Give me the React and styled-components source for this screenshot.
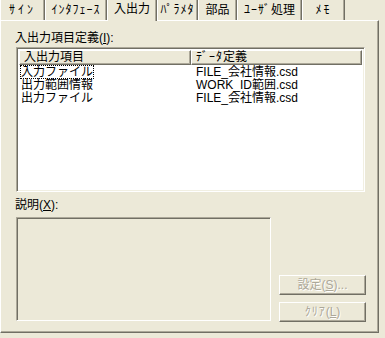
import React from "react";
import styled, { createGlobalStyle } from "styled-components";

const FONT = `"Liberation Sans", "Noto Sans CJK JP", sans-serif`;

const Global = createGlobalStyle`
  html, body { margin: 0; padding: 0; background: #ECE9D8; }
  body { font-family: ${FONT}; font-size: 12px; color: #000; }
  * { box-sizing: border-box; }
`;

const Page = styled.div`
  width: 385px;
  height: 338px;
  background: #ECE9D8;
  overflow: hidden;
`;

const Dialog = styled.div`
  width: 379px;
  display: flex;
  flex-direction: column;
`;

const TabStrip = styled.div`
  display: flex;
  align-items: flex-start;
  height: 20px;
`;

const Tab = styled.div`
  position: relative;
  z-index: ${(p) => (p.$active ? 2 : 1)};
  width: ${(p) => p.$w}px;
  height: ${(p) => (p.$active ? 21 : 20)}px;
  background: #ECE9D8;
  border-left: 1px solid #fff;
  border-right: 1px solid #716F64;
  box-shadow: inset -1px 0 0 #ACA899;
  display: flex;
  align-items: center;
  justify-content: center;
  line-height: 14px;
  padding-bottom: ${(p) => (p.$active ? 3 : 0)}px;
  white-space: nowrap;
`;

const Narrow = styled.span`
  letter-spacing: ${(p) => p.$ls ?? 1}px;
`;

const Panel = styled.div`
  height: 313px;
  background: #ECE9D8;
  border-top: 1px solid #fff;
  border-left: 1px solid #fff;
  border-right: 1px solid #716F64;
  border-bottom: 1px solid #716F64;
  box-shadow: inset -1px -1px 0 #ACA899;
  padding-left: 15px;
  display: flex;
  flex-direction: column;
`;

const Label = styled.div`
  margin-left: -1px;
  margin-top: ${(p) => p.$top}px;
  height: 14px;
  line-height: 14px;
  white-space: nowrap;
`;

const U = styled.span`
  text-decoration: underline;
`;

const ListBox = styled.div`
  margin-top: ${(p) => p.$top}px;
  width: 349px;
  height: 145px;
  background: #fff;
  border-top: 1px solid #ACA899;
  border-left: 1px solid #ACA899;
  border-right: 1px solid #fff;
  border-bottom: 1px solid #fff;
  box-shadow: inset 1px 1px 0 #716F64, inset -1px -1px 0 #F1EFE2;
  padding: 2px;
  display: flex;
  flex-direction: column;
`;

const HeaderRow = styled.div`
  display: flex;
  height: 15px;
`;

const HeaderCell = styled.div`
  width: ${(p) => p.$w}px;
  height: 15px;
  background: #ECE9D8;
  border-top: 1px solid #fff;
  border-left: 1px solid #fff;
  border-right: 1px solid #716F64;
  border-bottom: 1px solid #716F64;
  box-shadow: inset -1px -1px 0 #ACA899;
  line-height: 12px;
  padding-left: 4px;
  white-space: nowrap;
`;

const Row = styled.div`
  display: flex;
  height: 13px;
  line-height: 13px;
  margin-top: ${(p) => (p.$first ? 1 : 0)}px;
`;

const Cell = styled.div`
  width: ${(p) => p.$w}px;
  padding-left: ${(p) => p.$pad}px;
  white-space: nowrap;
`;

const CellText = styled.span`
  outline: ${(p) => (p.$focus ? "1px dotted #000" : "none")};
  outline-offset: -1px;
  padding: 0 1px;
`;

const Bottom = styled.div`
  margin-top: 5px;
  display: flex;
  align-items: flex-end;
  gap: 8px;
`;

const DescBox = styled.div`
  width: 255px;
  height: 104px;
  background: #ECE9D8;
  border-top: 1px solid #ACA899;
  border-left: 1px solid #ACA899;
  border-right: 1px solid #fff;
  border-bottom: 1px solid #fff;
  box-shadow: inset 1px 1px 0 #716F64;
`;

const ButtonCol = styled.div`
  display: flex;
  flex-direction: column;
  gap: 7px;
  margin-bottom: -1px;
`;

const Button = styled.button`
  width: 87px;
  height: 20px;
  margin: 0;
  padding: 0;
  font-family: ${FONT};
  font-size: 12px;
  line-height: 14px;
  color: #ACA899;
  text-shadow: 1px 1px 0 #fff;
  background: #ECE9D8;
  border-top: 1px solid #fff;
  border-left: 1px solid #fff;
  border-right: 1px solid #716F64;
  border-bottom: 1px solid #716F64;
  box-shadow: inset -1px -1px 0 #ACA899;
  cursor: default;
`;

const tabs = [
  { label: <Narrow $ls={3}>ｻｲﾝ</Narrow>, key: "sign", w: 45 },
  { label: <Narrow>ｲﾝﾀﾌｪｰｽ</Narrow>, key: "if", w: 62 },
  { label: "入出力", key: "io", w: 50, active: true },
  { label: <Narrow>ﾊﾟﾗﾒﾀ</Narrow>, key: "param", w: 41 },
  { label: "部品", key: "parts", w: 39 },
  { label: <><Narrow>ﾕｰｻﾞ</Narrow>処理</>, key: "user", w: 65 },
  { label: <Narrow $ls={2}>ﾒﾓ</Narrow>, key: "memo", w: 43 },
];

const rows = [
  ["入力ファイル", "FILE_会社情報.csd"],
  ["出力範囲情報", "WORK_ID範囲.csd"],
  ["出力ファイル", "FILE_会社情報.csd"],
];

export default function App() {
  return (
    <Page>
      <Global />
      <Dialog>
        <TabStrip>
          {tabs.map((t) => (
            <Tab key={t.key} $w={t.w} $active={t.active}>
              {t.label}
            </Tab>
          ))}
        </TabStrip>
        <Panel>
          <Label $top={10}>
            入出力項目定義(<U>I</U>):
          </Label>
          <ListBox $top={2}>
            <HeaderRow>
              <HeaderCell $w={173}>入出力項目</HeaderCell>
              <HeaderCell $w={172}>
                <Narrow>ﾃﾞｰﾀ</Narrow>定義
              </HeaderCell>
            </HeaderRow>
            {rows.map((r, i) => (
              <Row key={i} $first={i === 0}>
                <Cell $w={173} $pad={1}>
                  <CellText $focus={i === 0}>{r[0]}</CellText>
                </Cell>
                <Cell $w={172} $pad={5}>
                  {r[1]}
                </Cell>
              </Row>
            ))}
          </ListBox>
          <Label $top={6}>
            説明(<U>X</U>):
          </Label>
          <Bottom>
            <DescBox />
            <ButtonCol>
              <Button disabled>
                設定(<U>S</U>)...
              </Button>
              <Button disabled>
                <Narrow>ｸﾘｱ</Narrow>(<U>L</U>)
              </Button>
            </ButtonCol>
          </Bottom>
        </Panel>
      </Dialog>
    </Page>
  );
}
